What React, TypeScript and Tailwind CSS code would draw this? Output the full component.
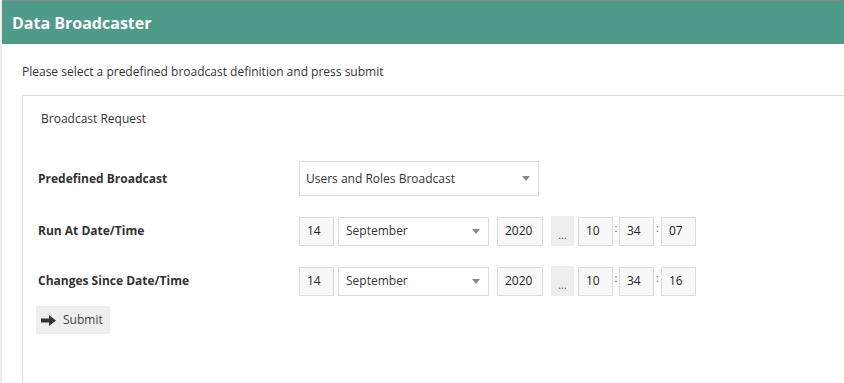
import React from 'react';

const Caret: React.FC = () => (
  <svg width="8" height="5" viewBox="0 0 8 5" className="shrink-0">
    <path d="M0 0h8L4 5z" fill="#888" />
  </svg>
);

const Box: React.FC<{ value: string; w: string }> = ({ value, w }) => (
  <div className={`${w} h-[29px] border border-[#dcdcdc] bg-[#f8f8f8] flex items-center pl-[7px] text-[12px] text-[#222]`}>
    {value}
  </div>
);

const DateTimeRow: React.FC<{ label: string; seconds: string; h: string }> = ({ label, seconds, h }) => (
  <div className={`flex items-center ${h}`}>
    <div className="w-[261px] font-bold text-[12px] text-[#333]">{label}</div>
    <div className="flex items-center">
      <Box value="14" w="w-[35px]" />
      <div className="ml-[4px] w-[151px] h-[29px] border border-[#dcdcdc] bg-white flex items-center justify-between pl-[7px] pr-[8px] text-[12px] text-[#333]">
        <span>September</span>
        <Caret />
      </div>
      <div className="ml-[8px]">
        <Box value="2020" w="w-[46px]" />
      </div>
      <div className="ml-[8px] w-[23px] h-[30px] bg-[#eeeeee] flex items-end justify-center pb-[6px] text-[11px] text-[#555] leading-none">
        ...
      </div>
      <div className="ml-[4px]">
        <Box value="10" w="w-[35px]" />
      </div>
      <span className="w-[6px] text-center text-[11px] text-[#555] -mt-[6px]">:</span>
      <Box value="34" w="w-[35px]" />
      <span className="w-[7px] text-center text-[11px] text-[#555] -mt-[6px]">:</span>
      <Box value={seconds} w="w-[35px]" />
    </div>
  </div>
);

export default function App() {
  return (
    <div className="w-[844px] h-[383px] bg-white border-l-2 border-[#ececec] overflow-hidden" style={{ fontFamily: '"Open Sans", sans-serif' }}>
      <header className="h-[44px] bg-[#4f9b8a] border-t border-[#7a8f8a] flex items-center pl-[10px]">
        <h1 className="text-white font-bold text-[16px]">Data Broadcaster</h1>
      </header>

      <main className="pl-[20px]">
        <p className="pt-[19px] text-[12px] text-[#333] leading-[18px]">
          Please select a predefined broadcast definition and press submit
        </p>

        <div className="mt-[14px] border-l border-t border-[#dddddd] h-[300px] pl-[15px]">
          <div className="pt-[14px] pl-[3px] text-[12px] text-[#333] leading-[18px]">Broadcast Request</div>

          <div className="mt-[33px] flex items-center h-[35px]">
            <div className="w-[261px] font-bold text-[12px] text-[#333]">Predefined Broadcast</div>
            <div className="w-[240px] h-[35px] border border-[#dcdcdc] bg-white flex items-center justify-between pl-[6px] pr-[8px] text-[12px] text-[#333]">
              <span>Users and Roles Broadcast</span>
              <Caret />
            </div>
          </div>

          <div className="mt-[20px]">
            <DateTimeRow label="Run At Date/Time" seconds="07" h="h-[30px]" />
          </div>
          <div className="mt-[20px]">
            <DateTimeRow label="Changes Since Date/Time" seconds="16" h="h-[30px]" />
          </div>

          <button className="mt-[10px] -ml-[2px] h-[28px] w-[74px] bg-[#eeeeee] flex items-center pl-[5px] gap-[7px] text-[12px] text-[#444]">
            <svg width="15" height="11" viewBox="0 0 15 11">
              <path d="M0 3.5h8V0l7 5.5-7 5.5V7.5H0z" fill="#333" />
            </svg>
            <span>Submit</span>
          </button>
        </div>
      </main>
    </div>
  );
}
